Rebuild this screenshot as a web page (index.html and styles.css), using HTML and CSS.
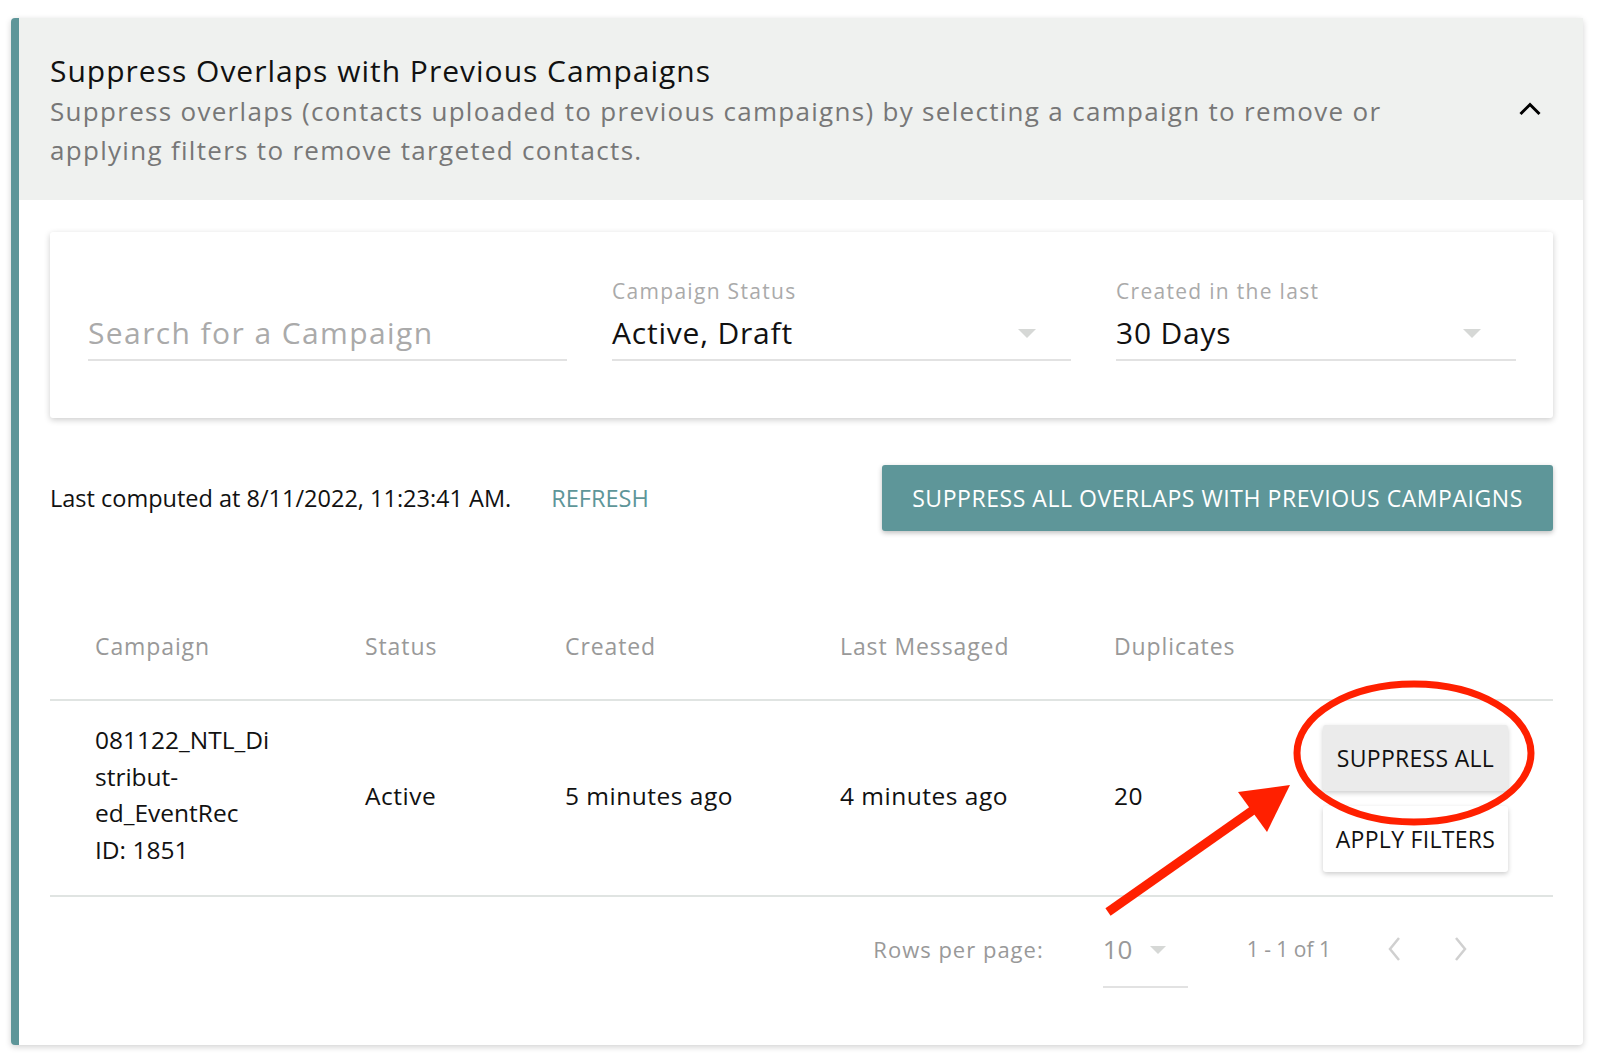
FILE: index.html
```html
<!DOCTYPE html>
<html lang="en">
<head>
    <meta charset="UTF-8">
    <title>Suppress Overlaps</title>
    <link rel="stylesheet" href="styles.css">
</head>
<body>

<div class="page">
    <div class="panel">
        <div class="panel-head">
            <div class="head-text">
                <h2 class="title">Suppress Overlaps with Previous Campaigns</h2>
                <p class="desc">Suppress overlaps (contacts uploaded to previous campaigns) by selecting a campaign to remove or applying filters to remove targeted contacts.</p>
            </div>
            <svg class="chevron" width="24" height="16" viewBox="0 0 24 16">
                <path d="M2.5 13 L12 3.5 L21.5 13" fill="none" stroke="#000" stroke-width="3"/>
            </svg>
        </div>

        <div class="panel-body">
            <div class="filters">
                <div class="field">
                    <div class="field-value placeholder">Search for a Campaign</div>
                </div>
                <div class="field">
                    <div class="field-label">Campaign Status</div>
                    <div class="field-value">Active, Draft <span class="caret"></span></div>
                </div>
                <div class="field">
                    <div class="field-label">Created in the last</div>
                    <div class="field-value">30 Days <span class="caret"></span></div>
                </div>
            </div>

            <div class="status-row">
                <div class="computed">
                    <span>Last computed at 8/11/2022, 11:23:41 AM.</span>
                    <a class="refresh">REFRESH</a>
                </div>
                <button class="btn-primary">SUPPRESS ALL OVERLAPS WITH PREVIOUS CAMPAIGNS</button>
            </div>

            <table class="overlaps">
                <colgroup>
                    <col class="col-campaign">
                    <col class="col-status">
                    <col class="col-created">
                    <col class="col-messaged">
                    <col class="col-dupes">
                    <col>
                </colgroup>
                <thead>
                    <tr>
                        <th>Campaign</th>
                        <th>Status</th>
                        <th>Created</th>
                        <th>Last Messaged</th>
                        <th>Duplicates</th>
                        <th></th>
                    </tr>
                </thead>
                <tbody>
                    <tr>
                        <td class="name">081122_NTL_Di<br>stribut-<br>ed_EventRec<br>ID: 1851</td>
                        <td>Active</td>
                        <td>5 minutes ago</td>
                        <td>4 minutes ago</td>
                        <td>20</td>
                        <td class="actions">
                            <button class="btn-flat btn-grey">SUPPRESS ALL</button>
                            <button class="btn-flat">APPLY FILTERS</button>
                        </td>
                    </tr>
                </tbody>
            </table>

            <div class="pager">
                <span class="pager-label">Rows per page:</span>
                <div class="pager-select">10 <span class="caret"></span></div>
                <span class="pager-range">1 - 1 of 1</span>
                <svg class="pager-arrow" width="16" height="26" viewBox="0 0 16 26"><path d="M13 2 L4 13 L13 24" fill="none" stroke="#d0d0d0" stroke-width="2.5"/></svg>
                <svg class="pager-arrow" width="16" height="26" viewBox="0 0 16 26"><path d="M3 2 L12 13 L3 24" fill="none" stroke="#d0d0d0" stroke-width="2.5"/></svg>
            </div>
        </div>
    </div>

    <!-- red markup drawn over the screenshot -->
    <svg class="markup" width="1600" height="1062" viewBox="0 0 1600 1062">
        <ellipse cx="1414" cy="753" rx="117" ry="69" fill="none" stroke="#ff2000" stroke-width="7"/>
        <line x1="1108" y1="912" x2="1256" y2="808" stroke="#ff2000" stroke-width="9"/>
        <polygon points="1290,785 1238,792 1267,832" fill="#ff2000"/>
    </svg>
</div>

</body>
</html>
```

FILE: styles.css
```css
body {
    margin: 0;
    font-family: "Open Sans", sans-serif;
    background-color: #fff;
    color: #111;
}
.page {
    position: relative;
    padding: 18px 17px 17px 11px;
}
.panel {
    background-color: #fff;
    border-left: 8px solid #5e9699;
    border-radius: 4px;
    box-shadow: 0 2px 6px rgba(0, 0, 0, 0.18);
}
.panel-head {
    background-color: #eff1ef;
    height: 182px;
    box-sizing: border-box;
    padding: 35px 41px 0 31px;
    display: flex;
    justify-content: space-between;
    align-items: flex-start;
}
.head-text {
    max-width: 1380px;
}
.title {
    margin: 0;
    font-size: 30px;
    font-weight: 400;
    line-height: 36px;
    letter-spacing: 1px;
    color: #111;
}
.desc {
    margin: 3px 0 0;
    font-size: 26px;
    line-height: 39px;
    letter-spacing: 1.3px;
    color: #777;
}
.chevron {
    margin-top: 48px;
}
.panel-body {
    padding: 32px 30px 57px 31px;
}
.filters {
    height: 186px;
    box-sizing: border-box;
    padding: 43px 37px 57px 38px;
    background-color: #fff;
    border-radius: 3px;
    box-shadow: 0 2px 6px rgba(0, 0, 0, 0.2);
    display: grid;
    grid-template-columns: 479px 459px 1fr;
    column-gap: 45px;
    align-items: end;
}
.field {
    border-bottom: 2px solid #e2e2e2;
    padding-bottom: 6px;
}
.field-label {
    font-size: 21px;
    line-height: 28px;
    letter-spacing: 1.3px;
    color: #aaa;
    margin-bottom: 8px;
}
.field-value {
    font-size: 30px;
    line-height: 40px;
    letter-spacing: 0.8px;
    color: #111;
    display: flex;
    justify-content: space-between;
    align-items: center;
}
.field-value.placeholder {
    color: #aaa;
    letter-spacing: 1.4px;
    margin-top: 2px;
}
.caret {
    width: 0;
    height: 0;
    border-left: 9px solid transparent;
    border-right: 9px solid transparent;
    border-top: 9px solid #d6d8d6;
    margin-right: 35px;
}
.status-row {
    margin-top: 47px;
    display: flex;
    justify-content: space-between;
    align-items: center;
}
.computed {
    font-size: 23.5px;
    display: flex;
    gap: 40px;
}
.refresh {
    color: #5e9699;
}
.btn-primary {
    width: 671px;
    height: 66px;
    border: none;
    border-radius: 3px;
    background-color: #5e9699;
    color: #fff;
    font-family: inherit;
    font-size: 23px;
    letter-spacing: 0.55px;
    box-shadow: 0 2px 5px rgba(0, 0, 0, 0.25);
}
.overlaps {
    width: 100%;
    margin-top: 62px;
    border-collapse: collapse;
    table-layout: fixed;
}
.col-campaign { width: 315px; }
.col-status { width: 200px; }
.col-created { width: 275px; }
.col-messaged { width: 274px; }
.col-dupes { width: 170px; }
.overlaps th {
    height: 106px;
    padding: 0;
    text-align: left;
    font-size: 23px;
    font-weight: 400;
    letter-spacing: 0.9px;
    color: #999;
    border-bottom: 2px solid #e0e4e2;
}
.overlaps th:first-child, .overlaps td:first-child {
    padding-left: 45px;
}
.overlaps td {
    height: 196px;
    padding: 0 0 6px;
    box-sizing: border-box;
    font-size: 24.5px;
    letter-spacing: 0.5px;
    color: #111;
    border-bottom: 2px solid #e0e4e2;
}
.overlaps td.name {
    line-height: 36.5px;
    letter-spacing: 0;
}
.overlaps td.actions {
    padding: 0 45px 0 0;
}
.btn-flat {
    display: block;
    margin-left: auto;
    width: 185px;
    height: 66px;
    border: none;
    border-radius: 3px;
    background-color: #fff;
    color: #111;
    font-family: inherit;
    font-size: 23px;
    letter-spacing: 0.3px;
    box-shadow: 0 2px 5px rgba(0, 0, 0, 0.2);
}
.btn-flat + .btn-flat {
    margin-top: 15px;
}
.btn-grey {
    background-color: #ebebeb;
}
.pager {
    display: flex;
    justify-content: flex-end;
    align-items: flex-start;
    padding: 30px 84px 0 0;
    line-height: 44px;
    color: #999;
}
.pager-label {
    font-size: 22px;
    letter-spacing: 1px;
    margin-right: 59px;
}
.pager-select {
    width: 85px;
    padding-bottom: 15px;
    border-bottom: 2px solid #e2e2e2;
    font-size: 26px;
    display: flex;
    justify-content: space-between;
    align-items: flex-start;
    margin-right: 59px;
}
.pager-select .caret {
    border-left-width: 8px;
    border-right-width: 8px;
    border-top-width: 8px;
    margin: 19px 22px 0 0;
}
.pager-range {
    font-size: 21px;
    margin-right: 55px;
}
.pager-arrow {
    margin-top: 9px;
}
.pager-arrow + .pager-arrow {
    margin-left: 51px;
}
.markup {
    position: absolute;
    left: 0;
    top: 0;
    pointer-events: none;
}
```
